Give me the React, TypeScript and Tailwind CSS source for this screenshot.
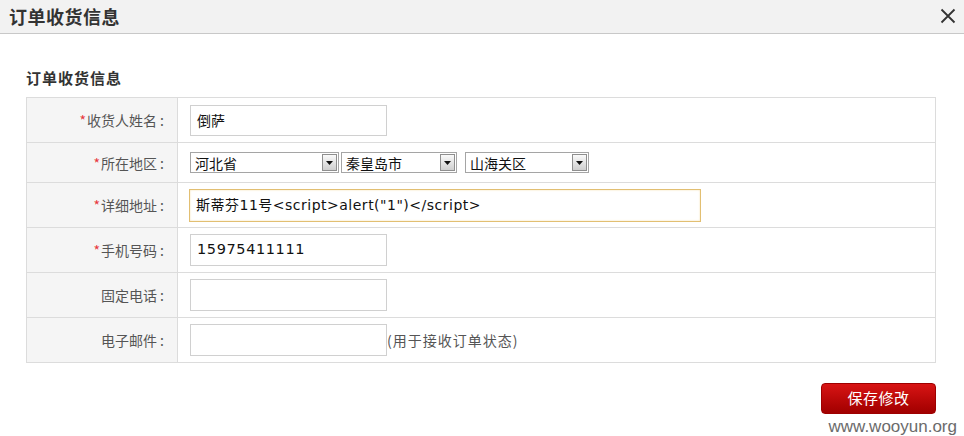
import React from "react";

const cjk = "font-['Noto_Sans_CJK_SC',sans-serif]";
const mixed = "font-['DejaVu_Sans','Noto_Sans_CJK_SC',sans-serif]";

function Arrow() {
  return (
    <div className="flex h-[17px] w-[15px] items-center justify-center border border-[#8f8f8f] bg-gradient-to-b from-[#fafafa] to-[#cfcfcf]">
      <svg width="7" height="4" viewBox="0 0 7 4">
        <path d="M0 0 H7 L3.5 4 Z" fill="#111" />
      </svg>
    </div>
  );
}

function FakeSelect({ text, cls }: { text: string; cls: string }) {
  return (
    <div className={`flex h-[21px] items-center justify-between border border-[#a5a5a5] bg-white pl-[4px] pr-[1px] ${cls}`}>
      <span className={`${cjk} text-[14px] leading-none text-[#111]`}>{text}</span>
      <Arrow />
    </div>
  );
}

function Label({ text, req }: { text: string; req?: boolean }) {
  return (
    <td className="w-[151px] border border-[#dcdcdc] bg-[#f5f5f5] pr-[13px] text-right align-middle">
      <span className={`${cjk} text-[14px] text-[#555]`}>
        {req && <span className="mr-[1px] text-[#e8383d]">*</span>}
        {text}
        <span className="ml-[3px]">:</span>
      </span>
    </td>
  );
}

export default function App() {
  return (
    <div className="relative h-[436px] w-[964px] overflow-hidden bg-white">
      <div className="flex h-[34px] items-center justify-between border-b border-[#c8c8c8] bg-[#f2f2f2] pb-[1px] pl-[9px] pr-[8px]">
        <span className={`${cjk} text-[18px] font-bold leading-none tracking-[0.5px] text-[#333]`}>订单收货信息</span>
        <svg width="16" height="16" viewBox="0 0 16 16">
          <path d="M1.5 1.5 L14.5 14.5 M14.5 1.5 L1.5 14.5" stroke="#333" strokeWidth="1.8" />
        </svg>
      </div>

      <div className="pl-[26px] pr-[28px]">
        <div className={`${cjk} mt-[34px] mb-[9px] text-[15px] font-bold leading-[20px] tracking-[1px] text-[#333]`}>订单收货信息</div>

        <table className="w-full border-collapse">
          <tbody>
            <tr className="h-[45px]">
              <Label text="收货人姓名" req />
              <td className="border border-[#dcdcdc] pl-[12px] align-middle">
                <div className={`${cjk} flex h-[31px] w-[197px] items-center border border-[#d0d0d0] pl-[6px] text-[14px] text-[#111]`}>倒萨</div>
              </td>
            </tr>
            <tr className="h-[40px]">
              <Label text="所在地区" req />
              <td className="border border-[#dcdcdc] pl-[12px] align-middle">
                <div className="flex items-center">
                  <FakeSelect text="河北省" cls="w-[149px]" />
                  <FakeSelect text="秦皇岛市" cls="ml-[2px] w-[116px]" />
                  <FakeSelect text="山海关区" cls="ml-[8px] w-[124px]" />
                </div>
              </td>
            </tr>
            <tr className="h-[45px]">
              <Label text="详细地址" req />
              <td className="border border-[#dcdcdc] pl-[11px] align-middle">
                <div className={`${mixed} flex h-[33px] w-[512px] items-center border border-[#e2bf72] pl-[6px] text-[14px] tracking-[0.5px] text-[#111] shadow-[inset_0_0_2px_#f3dca8]`}>
                  斯蒂芬11号&lt;script&gt;alert("1")&lt;/script&gt;
                </div>
              </td>
            </tr>
            <tr className="h-[45px]">
              <Label text="手机号码" req />
              <td className="border border-[#dcdcdc] pl-[12px] align-middle">
                <div className={`${mixed} flex h-[32px] w-[197px] items-center border border-[#d0d0d0] pl-[6px] text-[14.5px] tracking-[0.6px] text-[#111]`}>15975411111</div>
              </td>
            </tr>
            <tr className="h-[45px]">
              <Label text="固定电话" />
              <td className="border border-[#dcdcdc] pl-[12px] align-middle">
                <div className="h-[32px] w-[197px] border border-[#d0d0d0]" />
              </td>
            </tr>
            <tr className="h-[45px]">
              <Label text="电子邮件" />
              <td className="border border-[#dcdcdc] pl-[12px] align-middle">
                <div className="flex items-center">
                  <div className="h-[32px] w-[197px] border border-[#d0d0d0]" />
                  <span className={`${cjk} text-[14px] tracking-[1px] text-[#555]`}>(用于接收订单状态)</span>
                </div>
              </td>
            </tr>
          </tbody>
        </table>

        <div className="mt-[20px] flex justify-end">
          <button className={`${cjk} flex h-[31px] w-[115px] items-center justify-center rounded-[4px] border border-[#9e0000] bg-gradient-to-b from-[#d81414] to-[#a10000] text-[15px] tracking-[0.5px] text-white`}>
            保存修改
          </button>
        </div>
      </div>

      <div className="absolute right-[7px] top-[418px] font-['Liberation_Sans',Arial,sans-serif] text-[17px] leading-[17px] text-[#6b6b6b]">
        www.wooyun.org
      </div>
    </div>
  );
}
